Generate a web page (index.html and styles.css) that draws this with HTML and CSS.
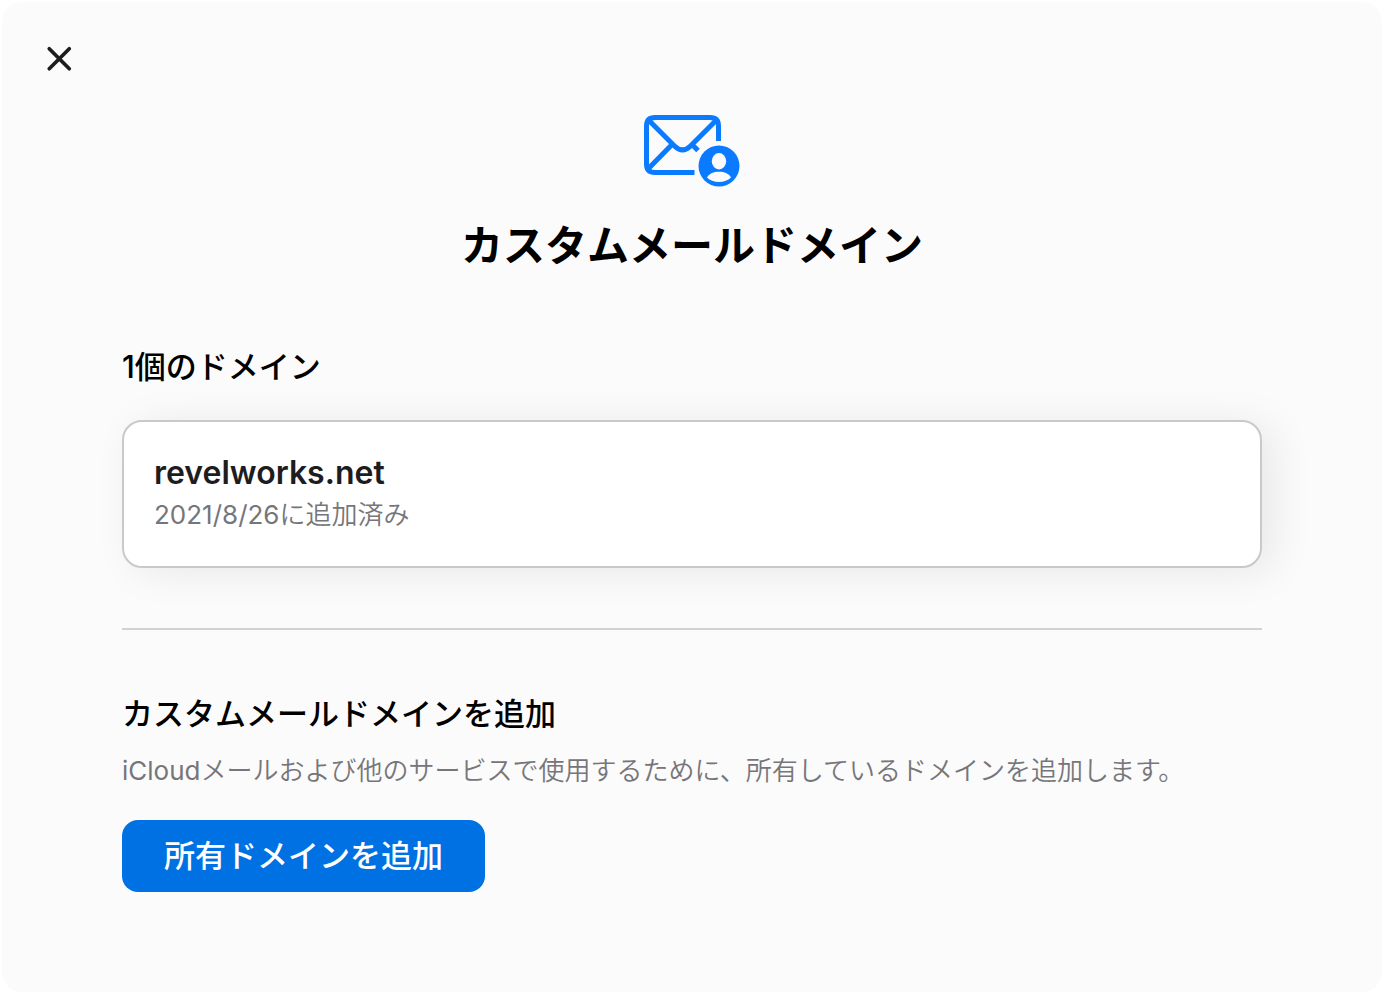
FILE: index.html
```html
<!DOCTYPE html>
<html lang="ja">
<head>
<meta charset="utf-8">
<meta name="viewport" content="width=device-width, initial-scale=1">
<title>カスタムメールドメイン</title>
<link rel="stylesheet" href="styles.css">
</head>
<body>
<main class="dialog">
  <button class="close" type="button" aria-label="閉じる">
    <svg class="close-icon" viewBox="0 0 24 24" aria-hidden="true"><path d="M3 2.500 21.500 21M21.500 2.500 3 21"/></svg>
  </button>
  <div class="content">
    <header class="header">
      <svg class="mail-icon" viewBox="0 0 96 72" aria-hidden="true">
        <path class="line" d="M74.500 26V11Q74.500 2.500 66 2.500H11Q2.500 2.500 2.500 11V49Q2.500 57.500 11 57.500H50.500"/>
        <path class="line" d="M4 4.500 30.500 31Q38.500 39 46.500 31L73 4.500M28 29.500 4 54M48 29.500 54 35.500"/>
        <circle class="disc" cx="75" cy="51" r="20.500"/>
        <ellipse class="person" cx="75" cy="46.200" rx="7.200" ry="8.200"/>
        <path class="person" d="M63 62.500C65.500 58.500 69.500 56.800 75 56.800S84.500 58.500 87 62.500C84 65.300 80 67 75 67S66 65.300 63 62.500Z"/>
      </svg>
      <h1 class="title">カスタムメールドメイン</h1>
    </header>
    <section class="domains">
      <h2 class="heading">1個のドメイン</h2>
      <button class="card" type="button">
        <span class="domain">revelworks.net</span>
        <span class="note">2021/8/26に追加済み</span>
      </button>
    </section>
    <section class="add">
      <h2 class="heading">カスタムメールドメインを追加</h2>
      <p class="note">iCloudメールおよび他のサービスで使用するために、所有しているドメインを追加します。</p>
      <button class="primary" type="button">所有ドメインを追加</button>
    </section>
  </div>
</main>
</body>
</html>
```
FILE: styles.css
```css
* {
  box-sizing: border-box;
}

body {
  margin: 0;
  padding: 2px;
  background: #fff;
  color: #000;
  font-family: Inter, "Noto Sans CJK JP", sans-serif;
}

button {
  margin: 0;
  font-family: inherit;
  cursor: pointer;
}

.dialog {
  min-height: calc(100vh - 4px);
  padding: 32px 0 100px;
  border-radius: 20px;
  background: #fbfbfb;
}

.close {
  display: flex;
  margin-left: 32px;
  padding: 12px;
  border: 0;
  background: none;
}

.close-icon {
  width: 26px;
  height: 26px;
  fill: none;
  stroke: #1d1d1f;
  stroke-width: 3.4;
  stroke-linecap: round;
}

.content {
  padding: 0 120px;
}

.header {
  display: flex;
  flex-direction: column;
  align-items: center;
  padding-top: 31px;
}

.mail-icon {
  width: 96px;
  height: 72px;
}

.line {
  fill: none;
  stroke: #0a7aff;
  stroke-width: 5;
}

.disc {
  fill: #0a7aff;
}

.person {
  fill: #fbfbfb;
}

.title {
  margin: 29px 0 0;
  font-size: 42px;
  font-weight: 700;
  line-height: 60px;
}

.heading {
  margin: 0;
  font-size: 31px;
  font-weight: 500;
  line-height: 44px;
}

.domains {
  padding: 69px 0 60px;
  border-bottom: 2px solid #d2d2d4;
}

.card {
  display: flex;
  flex-direction: column;
  align-items: flex-start;
  width: 100%;
  margin-top: 31px;
  padding: 29px 30px 31px;
  border: 2px solid #c9c9cb;
  border-radius: 20px;
  background: #fff;
  text-align: left;
  box-shadow: 12px 4px 40px rgba(0, 0, 0, 0.08);
}

.domain {
  color: #1d1d1f;
  font-size: 32px;
  font-weight: 600;
  line-height: 44px;
}

.note {
  margin: 0;
  color: #76767a;
  font-family: Inter, "Noto Sans CJK JP DemiLight", "Noto Sans CJK JP", sans-serif;
  font-size: 26px;
  font-weight: 400;
  line-height: 40px;
}

.add {
  padding-top: 62px;
}

.add .note {
  margin-top: 15px;
}

.primary {
  margin-top: 29px;
  padding: 14px 42px;
  border: 0;
  border-radius: 16px;
  background: #0071e3;
  color: #fff;
  font-size: 31px;
  font-weight: 500;
  line-height: 44px;
}
```
